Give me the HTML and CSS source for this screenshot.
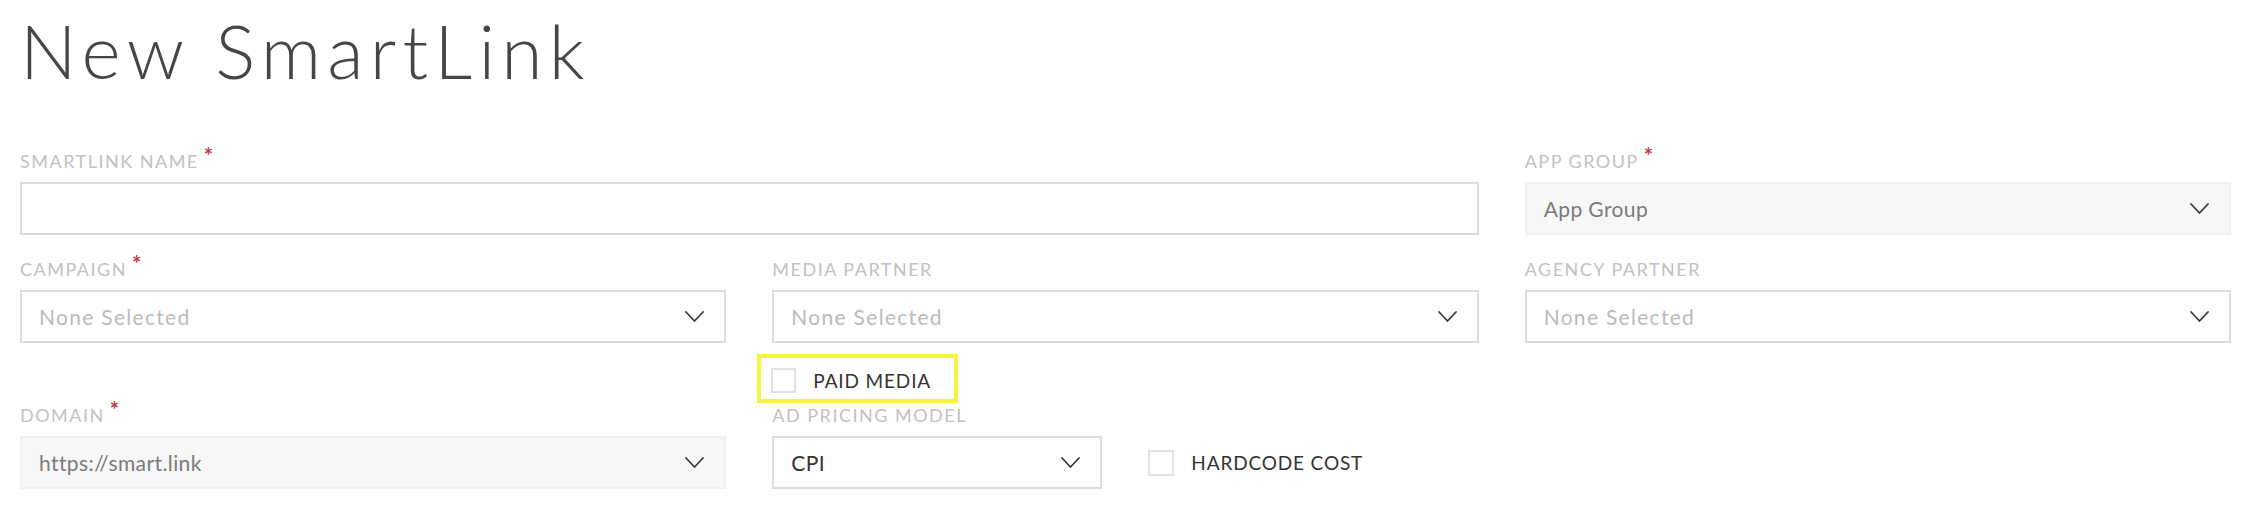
FILE: index.html
```html
<!DOCTYPE html>
<html lang="en">
<head>
<meta charset="utf-8">
<title>New SmartLink</title>
<link rel="stylesheet" href="styles.css">
</head>
<body>
<div class="page">
  <h1 class="title">New SmartLink</h1>
  <form class="form">
    <div class="field span-2">
      <div class="label">SmartLink Name<span class="req">*</span></div>
      <div class="box"></div>
    </div>
    <div class="field">
      <div class="label">App Group<span class="req">*</span></div>
      <div class="box disabled"><span class="value">App Group</span><svg class="chev" width="19" height="11" viewBox="0 0 19 11"><polyline points="1,1 9.5,10 18,1"/></svg></div>
    </div>

    <div class="field row2">
      <div class="label">Campaign<span class="req">*</span></div>
      <div class="box"><span class="placeholder">None Selected</span><svg class="chev" width="19" height="11" viewBox="0 0 19 11"><polyline points="1,1 9.5,10 18,1"/></svg></div>
    </div>
    <div class="field row2">
      <div class="label">Media Partner</div>
      <div class="box"><span class="placeholder">None Selected</span><svg class="chev" width="19" height="11" viewBox="0 0 19 11"><polyline points="1,1 9.5,10 18,1"/></svg></div>
    </div>
    <div class="field row2">
      <div class="label">Agency Partner</div>
      <div class="box"><span class="placeholder">None Selected</span><svg class="chev" width="19" height="11" viewBox="0 0 19 11"><polyline points="1,1 9.5,10 18,1"/></svg></div>
    </div>

    <div class="paid">
      <span class="check"></span>
      <span class="check-label">Paid Media</span>
    </div>

    <div class="field row4 col-1">
      <div class="label">Domain<span class="req">*</span></div>
      <div class="box disabled"><span class="value">https://smart.link</span><svg class="chev" width="19" height="11" viewBox="0 0 19 11"><polyline points="1,1 9.5,10 18,1"/></svg></div>
    </div>
    <div class="field row4 col-2">
      <div class="label">Ad Pricing Model</div>
      <div class="pricing">
        <div class="box small"><span class="value dark">CPI</span><svg class="chev" width="19" height="11" viewBox="0 0 19 11"><polyline points="1,1 9.5,10 18,1"/></svg></div>
        <span class="check big"></span>
        <span class="check-label">Hardcode Cost</span>
      </div>
    </div>
  </form>
</div>
</body>
</html>
```

FILE: styles.css
```css
html, body {
  margin: 0;
  padding: 0;
  background: #ffffff;
}

body {
  font-family: "Lato", "Liberation Sans", sans-serif;
}

.page {
  padding: 5px 31px 0 20px;
}

.title {
  margin: 0;
  font-weight: 300;
  font-size: 75px;
  line-height: 90px;
  color: #464646;
  letter-spacing: 6.2px;
}

.form {
  display: grid;
  grid-template-columns: repeat(3, 1fr);
  column-gap: 46px;
  margin-top: 55px;
}

.span-2 {
  grid-column: 1 / span 2;
}

.row2 {
  margin-top: 23px;
}

.row4 {
  margin-top: 1px;
}

.col-1 {
  grid-column: 1;
}

.col-2 {
  grid-column: 2;
}

.label {
  font-size: 18px;
  line-height: 22px;
  color: #c2c2c2;
  text-transform: uppercase;
  letter-spacing: 1.5px;
  margin-bottom: 10px;
  white-space: nowrap;
}

.req {
  color: #c0393b;
  font-size: 22px;
  font-weight: 700;
  line-height: 0;
  vertical-align: 4px;
  margin-left: 5px;
}

.box {
  box-sizing: border-box;
  height: 53px;
  border: 2px solid #dddddd;
  background: #ffffff;
  display: flex;
  align-items: center;
  justify-content: space-between;
  padding: 0 20px 0 17px;
  font-size: 21px;
  letter-spacing: 0.4px;
}

.box.disabled {
  background: #f7f7f7;
  border-color: #f1f1f1;
}

.box.small {
  width: 330px;
  flex: none;
}

.placeholder {
  color: #bbbbbb;
  letter-spacing: 1.3px;
}

.value {
  color: #7b7b7b;
}

.value.dark {
  color: #333333;
}

.chev {
  flex: none;
  fill: none;
  stroke: #3a3a3a;
  stroke-width: 1.8;
  stroke-linecap: round;
  stroke-linejoin: round;
}

.paid {
  grid-column: 2;
  justify-self: start;
  display: flex;
  align-items: center;
  margin: 11px 0 0 -15px;
  padding: 10px 23px 6px 10px;
  border: 4px solid #f6f43c;
}

.check {
  box-sizing: border-box;
  width: 25px;
  height: 25px;
  border: 2px solid #e2e2e2;
  background: #ffffff;
  flex: none;
}

.check.big {
  width: 26px;
  height: 26px;
  margin-left: 46px;
}

.check-label {
  margin-left: 17px;
  font-size: 19px;
  line-height: 22px;
  color: #333333;
  text-transform: uppercase;
  letter-spacing: 0.85px;
  white-space: nowrap;
}

.pricing {
  display: flex;
  align-items: center;
}
```
